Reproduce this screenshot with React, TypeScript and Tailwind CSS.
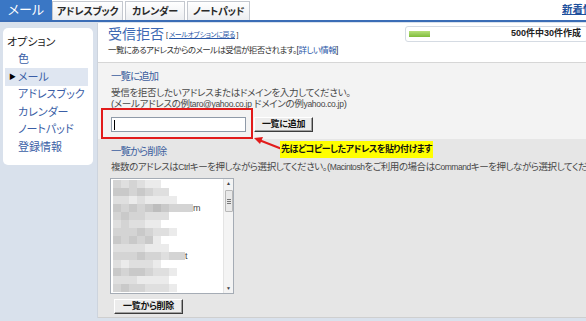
const shades = ['bg-[#bdbdbd]', 'bg-[#c9c9c9]', 'bg-[#d4d4d4]', 'bg-[#dfdfdf]', 'bg-[#ebebeb]'];

const mosaic: { cells: number[]; tail?: string }[] = [
  { cells: [2, 3, 2, 3, 4, 4] },
  { cells: [1, 1, 2, 1, 2, 3, 3] },
  { cells: [3, 3, 4, 3, 4, 4, 4, 4] },
  { cells: [1, 2, 1, 2, 1, 0, 1, 2, 2, 2], tail: 'm' },
  { cells: [2, 1, 2, 2, 3, 3, 3] },
  { cells: [3, 2, 3, 3, 4, 4] },
  { cells: [2, 2, 2, 1, 2, 3, 3, 4] },
  { cells: [1, 2, 1, 2, 1, 4] },
  { cells: [3, 3, 3, 3, 4, 4, 4] },
  { cells: [2, 2, 2, 1, 2, 2, 3, 2, 2], tail: 't' },
  { cells: [3, 4, 3, 3, 3, 4] },
  { cells: [1, 2, 1, 1, 2, 3, 3, 4] },
  { cells: [3, 3, 3, 4, 4, 4, 4] },
  { cells: [2, 1, 2, 2, 3, 3, 3, 4] },
];

function Tab({ w, children }: { w: string; children: React.ReactNode }) {
  return (
    <div
      className={`${w} shrink-0 mt-[1px] border border-b-0 border-[#c4c8cf] bg-gradient-to-b from-white to-[#eceef1] flex items-center justify-center text-[10px] font-bold text-[#2a2a2a] tracking-[-0.3px]`}
    >
      {children}
    </div>
  );
}

function Btn({ w, children }: { w: string; children: React.ReactNode }) {
  return (
    <div
      className={`${w} h-[15px] bg-[#ececec] border border-t-[#ffffff] border-l-[#ffffff] border-r-[#3c3c3c] border-b-[#3c3c3c] shadow-[inset_-1px_-1px_0_#a0a0a0] flex items-center justify-center text-[9px] font-bold text-[#111] tracking-[-0.3px]`}
    >
      {children}
    </div>
  );
}

export default function App() {
  return (
    <div className="w-[586px] h-[321px] overflow-hidden relative bg-[#d9e1ec] text-[#333] font-['Liberation_Sans','Noto_Sans_CJK_JP',sans-serif] [font-feature-settings:'palt']">
      {/* Tab bar */}
      <div className="h-[20px] bg-white flex items-stretch whitespace-nowrap">
        <div className="w-[52px] shrink-0 bg-[#3a77c5] text-white text-[13px] flex items-center justify-center">メール</div>
        <Tab w="w-[71px]">アドレスブック</Tab>
        <div className="w-[2px] shrink-0" />
        <Tab w="w-[60px]">カレンダー</Tab>
        <div className="w-[2px] shrink-0" />
        <Tab w="w-[63px]">ノートパッド</Tab>
        <div className="ml-[312px] flex items-center text-[10.5px] font-bold text-[#1d4f9c] underline shrink-0">新着情報</div>
      </div>
      <div className="h-[2px] bg-[#3b6db6]" />

      <div className="flex">
        {/* Sidebar */}
        <div className="w-[97px] shrink-0">
          <div className="ml-[3px] mt-[6px] w-[90px] h-[137px] bg-white rounded-[5px] pt-[5px] text-[11px]">
            <div className="h-[17.5px] flex items-center pl-[4px] text-[#222]">オプション</div>
            <div className="h-[17.5px] flex items-center pl-[15px] text-[#3a5ea6]">色</div>
            <div className="h-[17.5px] flex items-center ml-[2px] mr-[5px] bg-[#dfe6f1] text-[#3a5ea6]">
              <span className="w-[13px] pl-[4px] text-[7px] text-black">▶</span>
              <span>メール</span>
            </div>
            <div className="h-[17.5px] flex items-center pl-[15px] text-[#3a5ea6]">アドレスブック</div>
            <div className="h-[17.5px] flex items-center pl-[15px] text-[#3a5ea6]">カレンダー</div>
            <div className="h-[17.5px] flex items-center pl-[15px] text-[#3a5ea6]">ノートパッド</div>
            <div className="h-[17.5px] flex items-center pl-[15px] text-[#3a5ea6]">登録情報</div>
          </div>
        </div>

        {/* Main */}
        <div className="flex-1 min-w-0 mt-[1px] border-l border-[#cdd4de] whitespace-nowrap">
          {/* Header */}
          <div className="h-[40px] bg-white pl-[10px] border-b border-[#d6d6d6]">
            <div className="flex items-center h-[20px] pt-[2px]">
              <span className="text-[14px] tracking-[0px] text-[#3d68b3]">受信拒否</span>
              <span className="ml-[2px] mt-[2px] text-[7px] tracking-[-0.4px] text-[#333]">
                [ <span className="text-[#2a58a8] underline">メールオプションに戻る</span> ]
              </span>
              <div className="ml-auto -mr-[2px] w-[183px] h-[16px] border border-[#d5dbe3] rounded-[3px] flex items-center pl-[3px] pr-[6px] shrink-0">
                <div className="w-[21px] h-[6px] bg-gradient-to-b from-[#b6e07a] to-[#7fbc3a]" />
                <span className="ml-auto text-[9px] font-bold text-[#222]">500件中30件作成</span>
              </div>
            </div>
            <div className="mt-[1px] text-[8.5px] tracking-[-0.6px] leading-[12px] text-[#333]">
              一覧にあるアドレスからのメールは受信が拒否されます。[<span className="text-[#2a58a8]">詳しい情報</span>]
            </div>
          </div>

          {/* Add section */}
          <div className="h-[76px] bg-[#f3f3f3] pl-[13px]">
            <div className="pt-[6px] h-[20px] text-[10.5px] tracking-[-1px] leading-[14px] text-[#3d5f9e]">一覧に追加</div>
            <div className="mt-[4px] text-[9.5px] tracking-[-0.3px] leading-[11px] text-[#484848]">受信を拒否したいアドレスまたはドメインを入力してください。</div>
            <div className="text-[9.5px] tracking-[-0.3px] leading-[11px] text-[#484848]">
              (メールアドレスの例<span className="text-[8.5px]">taro@yahoo.co.jp</span> ドメインの例<span className="text-[8.5px]">yahoo.co.jp</span>)
            </div>
            <div className="mt-[7px] flex items-center">
              <div className="w-[135px] h-[15px] bg-white border border-[#8f9aa8] flex items-center pl-[2px]">
                <div className="w-[1px] h-[10px] bg-black" />
              </div>
              <div className="ml-[8px]">
                <Btn w="w-[59px]">一覧に追加</Btn>
              </div>
            </div>
          </div>

          {/* Delete section */}
          <div className="h-[179px] bg-[#e6e6e6] pl-[13px] border-b border-[#cfcfcf]">
            <div className="pt-[5px] h-[20px] text-[10.5px] tracking-[-1px] leading-[14px] text-[#3d5f9e]">一覧から削除</div>
            <div className="mt-[2px] text-[9.5px] tracking-[-0.45px] leading-[12px] text-[#484848]">
              複数のアドレスは<span className="text-[8.5px]">Ctrl</span>キーを押しながら選択してください。(<span className="text-[8.5px]">Macintosh</span>をご利用の場合は<span className="text-[8.5px]">Command</span>キーを押しながら選択してくださ
            </div>
            <div className="mt-[5px] -ml-[1px] w-[124px] h-[116px] bg-white border border-[#a5acb5] flex">
              <div className="flex-1 pt-[1px] pl-[2px]">
                {mosaic.map((r, i) => (
                  <div key={i} className="flex h-[8px] items-center">
                    {r.cells.map((c, j) => (
                      <div key={j} className={`w-[8px] h-[8px] ${shades[c]}`} />
                    ))}
                    {r.tail && <span className="text-[9px] leading-[8px] text-[#444]">{r.tail}</span>}
                  </div>
                ))}
              </div>
              <div className="w-[10px] bg-[#f4f4f4] border-l border-[#e4e4e4] flex flex-col items-center">
                <div className="text-[5px] leading-[9px] text-[#444]">▲</div>
                <div className="w-[8px] h-[22px] mt-[2px] bg-[#e9e9e9] border border-[#b8b8b8] rounded-[1px] flex flex-col items-center justify-center gap-[1px]">
                  <div className="w-[4px] h-[1px] bg-[#777]" />
                  <div className="w-[4px] h-[1px] bg-[#777]" />
                  <div className="w-[4px] h-[1px] bg-[#777]" />
                </div>
                <div className="mt-auto text-[5px] leading-[9px] text-[#444]">▼</div>
              </div>
            </div>
            <div className="mt-[5px] ml-[3px]">
              <Btn w="w-[69px]">一覧から削除</Btn>
            </div>
          </div>
        </div>
      </div>

      {/* Annotations */}
      <div className="absolute left-[101px] top-[108px] w-[152px] h-[31px] border-2 border-[#e21b1b]" />
      <svg className="absolute left-[250px] top-[132px]" width="36" height="22" viewBox="0 0 36 22">
        <line x1="32" y1="17" x2="9" y2="8" stroke="#e21b1b" strokeWidth="2" />
        <polygon points="4,6 13,5 10,12" fill="#e21b1b" />
      </svg>
      <div className="absolute left-[280px] top-[141px] w-[153px] h-[17px] bg-[#ffff00] flex items-center justify-center text-[9px] tracking-[-0.5px] font-bold text-[#111] whitespace-nowrap">
        先ほどコピーしたアドレスを貼り付けます
      </div>
    </div>
  );
}
